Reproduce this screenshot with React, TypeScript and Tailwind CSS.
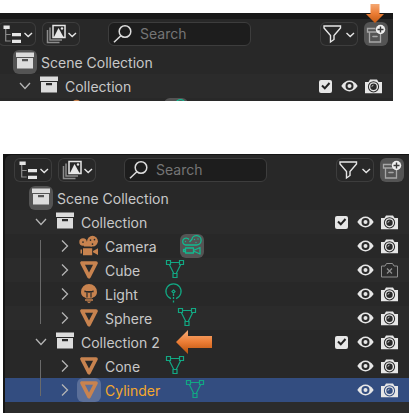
import type { ReactNode } from 'react';

type ObjectKind = 'camera' | 'mesh' | 'light';

interface SceneObject {
  name: string;
  kind: ObjectKind;
  renderable?: boolean;
  selected?: boolean;
}

interface SceneCollection {
  name: string;
  objects: SceneObject[];
  pointer?: boolean;
}

const fullScene: SceneCollection[] = [
  {
    name: 'Collection',
    objects: [
      { name: 'Camera', kind: 'camera' },
      { name: 'Cube', kind: 'mesh', renderable: false },
      { name: 'Light', kind: 'light' },
      { name: 'Sphere', kind: 'mesh' },
    ],
  },
  {
    name: 'Collection 2',
    pointer: true,
    objects: [
      { name: 'Cone', kind: 'mesh' },
      { name: 'Cylinder', kind: 'mesh', selected: true },
    ],
  },
];

function Icon({ children, className = '' }: { children: ReactNode; className?: string }) {
  return (
    <svg viewBox="0 0 24 24" fill="none" aria-hidden="true" className={`size-6 shrink-0 ${className}`}>
      {children}
    </svg>
  );
}

function CollectionIcon() {
  return (
    <Icon className="text-[#dcdcdc]">
      <path fill="currentColor" d="M3 2.500h18V7H3zM4 8h16v10.500H4zM9 9v2.200h6V9z" fillRule="evenodd" />
    </Icon>
  );
}

function ObjectIcon({ kind }: { kind: ObjectKind }) {
  if (kind === 'mesh') {
    return (
      <Icon className="text-[#c8834f]">
        <path d="M5 5h14L12 18.700z" stroke="currentColor" strokeWidth="3.700" strokeLinejoin="round" />
      </Icon>
    );
  }
  if (kind === 'light') {
    return (
      <Icon className="text-[#c8834f]">
        <path
          fill="currentColor"
          d="M12 2a8 8 0 0 0-8 8c0 2.800 1.500 5 4 5.500l1.200 1h5.600l1.200-1c2.500-.5 4-2.700 4-5.500a8 8 0 0 0-8-8zM8 17.300h8v1.500H8zM9.500 19.500h5L12 21.300z"
        />
        <path d="M8 8.500v1.200h8V8.500M10 9.700v5.800M14 9.700v5.800M12 9.700V11" stroke="#2a2a2a" strokeWidth="1.200" />
      </Icon>
    );
  }
  return (
    <Icon className="text-[#c8834f]">
      <circle cx="6" cy="8" r="3.700" fill="currentColor" />
      <circle cx="15.500" cy="7.200" r="5.400" fill="currentColor" />
      <path fill="currentColor" d="M6 7.500h9v5H7zM6 14.300h9.200v7H6zM3.500 15.500H5v4H3.500zM16 17l5-2.800v6.800l-5-2.700z" />
      <path d="M13.500 6v.1M17.500 5.500v.1M15.500 10v.1M6 8v.1" stroke="#2a2a2a" strokeWidth="1.700" strokeLinecap="round" />
    </Icon>
  );
}

function DataIcon({ kind }: { kind: ObjectKind }) {
  if (kind === 'mesh') {
    return (
      <Icon className="text-[#12a883]">
        <path
          d="M3.500 2.500h4v4h-4zM16.500 2.500h4v4h-4zM10 15.500h4v4h-4zM7.500 4.500h9M6.300 6.500l4.500 9M17.700 6.500l-4.500 9"
          stroke="currentColor"
          strokeWidth="1.200"
        />
      </Icon>
    );
  }
  if (kind === 'light') {
    return (
      <Icon className="text-[#12a883]">
        <path d="M10 16.600a7.600 7.600 0 1 1 5 0" stroke="currentColor" strokeWidth="1.200" />
        <path d="M12.500 8l1.600 1.600-1.600 1.600-1.600-1.600z" stroke="currentColor" strokeWidth="1.100" />
        <path d="M12.500 12v2M12.500 15v2M12.500 18.500v2" stroke="currentColor" strokeWidth="1.300" />
      </Icon>
    );
  }
  return (
    <Icon className="rounded-md bg-[#545454] text-[#12b98f]">
      <path
        d="M9 5.500A3.500 3.500 0 1 0 5.500 11h11a4.700 4.700 0 1 0-4.700-5.500L9.500 8M5.500 14h8v5h-8zM5.500 15.500h-2v2h2M13.500 16.500l6.500-3v6.500l-6.500-3"
        stroke="currentColor"
        strokeWidth="1.300"
        strokeLinejoin="round"
      />
      <path d="M14.500 5.500v.1M18 5v.1M16 8.500v.1M5.500 7.500v.1" stroke="currentColor" strokeWidth="1.400" strokeLinecap="round" />
    </Icon>
  );
}

function EyeIcon() {
  return (
    <Icon>
      <path
        fill="currentColor"
        fillRule="evenodd"
        d="M3.300 12C5.500 8.500 8.500 6.600 11.500 6.600s6 1.900 8.200 5.400c-2.200 3.500-5.200 5.400-8.200 5.400s-6-1.900-8.200-5.400zM11.500 8a4 4 0 1 0 0 8 4 4 0 0 0 0-8z"
      />
      <circle cx="11.500" cy="12" r="2" fill="currentColor" />
    </Icon>
  );
}

function RenderIcon({ enabled }: { enabled: boolean }) {
  if (!enabled) {
    return (
      <Icon className="text-[#8f8f8f]">
        <path d="M3.500 8H7l1.500-2.500h6L16 8h3.500v11h-16z" stroke="currentColor" strokeLinejoin="round" />
        <path d="M9 10.500l5 5M14 10.500l-5 5" stroke="currentColor" strokeWidth="1.200" />
      </Icon>
    );
  }
  return (
    <Icon>
      <path
        fill="currentColor"
        fillRule="evenodd"
        d="M3 8h3.500l1.500-2.500h7L16.500 8H20v11.300H3zM11.500 7.200a5.600 5.600 0 1 0 0 11.200 5.600 5.600 0 0 0 0-11.200z"
      />
      <circle cx="11.500" cy="12.800" r="3.900" stroke="currentColor" strokeWidth="1.400" />
      <path d="M9.900 12.800a1.600 1.600 0 0 1 1.600-1.600" stroke="currentColor" strokeWidth="0.700" />
    </Icon>
  );
}

function Disclosure({ open, name }: { open: boolean; name: string }) {
  return (
    <button type="button" aria-expanded={open} aria-label={`Toggle ${name}`} className="size-6 shrink-0 text-[#b5b5b5]">
      <Icon>
        <path d={open ? 'M7 9l5 5.500L17 9' : 'M9 6.500l5.500 5.500L9 17.500'} stroke="currentColor" strokeWidth="1.300" />
      </Icon>
    </button>
  );
}

function Label({ children, selected = false }: { children: ReactNode; selected?: boolean }) {
  return <span className={`ml-1 pt-0.5 whitespace-nowrap ${selected ? 'text-[#f5a82c]' : ''}`}>{children}</span>;
}

function Toggles({ name, renderable = true }: { name: string; renderable?: boolean }) {
  return (
    <>
      <button type="button" aria-label={`Hide ${name} in viewport`} className="size-6">
        <EyeIcon />
      </button>
      <button type="button" aria-label={`Disable ${name} in renders`} className="size-6">
        <RenderIcon enabled={renderable} />
      </button>
    </>
  );
}

function ObjectRow({ object }: { object: SceneObject }) {
  const { name, kind, selected } = object;
  return (
    <li className={`flex h-6 items-center pr-[7px] pl-12 ${selected ? 'bg-[#334d80]' : 'even:bg-[#2b2b2b]'}`}>
      <Disclosure open={false} name={name} />
      <span className={`size-6 shrink-0 rounded-md ${selected ? 'bg-[#5b6f99]' : ''}`}>
        <ObjectIcon kind={kind} />
      </span>
      <Label selected={selected}>{name}</Label>
      <span className="ml-[23px]">
        <DataIcon kind={kind} />
      </span>
      <div className="ml-auto flex text-[#e6e6e6]">
        <Toggles name={name} renderable={object.renderable} />
      </div>
    </li>
  );
}

function CollectionRow({ name, pointer = false, striped }: { name: string; pointer?: boolean; striped: boolean }) {
  return (
    <div className={`flex h-6 items-center pr-[7px] pl-6 ${striped ? 'bg-[#2b2b2b]' : ''}`}>
      <Disclosure open name={name} />
      <CollectionIcon />
      <Label>{name}</Label>
      {pointer && <LeftArrow />}
      <div className="ml-auto flex text-[#e6e6e6]">
        <label className="relative flex size-6 items-center pl-[5px]">
          <input
            type="checkbox"
            defaultChecked
            aria-label={`Include ${name}`}
            className="size-[13px] appearance-none rounded-xs bg-[#e6e6e6]"
          />
          <Icon className="pointer-events-none absolute inset-0 text-[#222222]">
            <path d="M8 11.500l2.800 2.800L15.500 9" stroke="currentColor" strokeWidth="2" />
          </Icon>
        </label>
        <Toggles name={name} />
      </div>
    </div>
  );
}

function CollectionGroup({ collection, striped }: { collection: SceneCollection; striped: boolean }) {
  const { name, objects, pointer } = collection;
  return (
    <section>
      <CollectionRow name={name} pointer={pointer} striped={striped} />
      <ul className="relative">
        {objects.map((object) => (
          <ObjectRow key={object.name} object={object} />
        ))}
        <li aria-hidden="true" className="absolute inset-y-1.5 left-[35px] w-px bg-[#6a6a6a]" />
      </ul>
    </section>
  );
}

/* Top sliver of the row that is scrolled out of view below a collection. */
function RowSliver() {
  return (
    <div aria-hidden="true" className="flex h-[3px] items-start overflow-hidden pl-[72px]">
      <ObjectIcon kind="camera" />
      <span className="ml-[79px]">
        <DataIcon kind="camera" />
      </span>
    </div>
  );
}

function LeftArrow() {
  return (
    <svg viewBox="0 0 36 24" aria-hidden="true" className="ml-4 h-6 w-9 shrink-0">
      <defs>
        <linearGradient id="pointer-left" x1="0" y1="0" x2="0" y2="1">
          <stop offset="0.100" stopColor="#f6a56d" />
          <stop offset="0.500" stopColor="#ec7d35" />
          <stop offset="0.900" stopColor="#c25a14" />
        </linearGradient>
      </defs>
      <path d="M0 12L12 0v6h24v12H12v6z" fill="url(#pointer-left)" />
    </svg>
  );
}

function DownArrow() {
  return (
    <svg viewBox="0 0 18 19" aria-hidden="true" className="pointer-events-none absolute right-[9px] -top-[9px] h-[19px] w-[18px]">
      <defs>
        <linearGradient id="pointer-down" x1="0" y1="0" x2="0" y2="1">
          <stop offset="0" stopColor="#f4a873" />
          <stop offset="0.500" stopColor="#ec7d35" />
          <stop offset="1" stopColor="#c25a14" />
        </linearGradient>
      </defs>
      <path d="M4.500 0h9v10H18l-9 9-9-9h4.500z" fill="url(#pointer-down)" />
    </svg>
  );
}

function MenuButton({ label, children }: { label: string; children: ReactNode }) {
  return (
    <button
      type="button"
      aria-label={label}
      aria-haspopup="menu"
      className="h-6 w-[38px] shrink-0 rounded-md text-[#e6e6e6] ring-1 ring-[#3d3d3d] ring-inset"
    >
      <svg viewBox="0 0 38 24" fill="none" aria-hidden="true" className="h-6 w-[38px]">
        {children}
        <path d="M26.500 11l3.700 3.500L34 11" stroke="currentColor" strokeWidth="1.400" />
      </svg>
    </button>
  );
}

function Header() {
  return (
    <header className="flex items-center pt-[3px] pr-[5px] pb-1 pl-[9px]">
      <div className="flex gap-1.5">
        <MenuButton label="Editor type">
          <path fill="currentColor" d="M5.500 3.500h6.200V7H5.500zM14 11h9v3.200h-9zM14 17.700h9V21h-9z" />
          <path d="M7.700 7v12h5M7.700 12.500h5" stroke="#8c8c8c" strokeWidth="1.200" />
        </MenuButton>
        <MenuButton label="Display mode">
          <path d="M5.500 8v12.500h12M8 5.500V18h12" stroke="#8c8c8c" strokeWidth="1.500" />
          <path d="M11 3.500h12v12H11z" stroke="currentColor" strokeWidth="1.500" />
          <path d="M12 15l4.500-9 5 9z" fill="currentColor" />
          <circle cx="20" cy="6.500" r="1.200" fill="currentColor" />
        </MenuButton>
      </div>
      <label className="relative ml-7 w-[143px]">
        <Icon className="absolute top-0 left-0 text-[#dcdcdc]">
          <circle cx="17" cy="9.500" r="5.800" stroke="currentColor" strokeWidth="1.500" />
          <path d="M12.800 13.700L6 20.300" stroke="currentColor" strokeWidth="1.500" />
        </Icon>
        <input
          type="search"
          aria-label="Search"
          placeholder="Search"
          className="block h-6 w-full rounded-md border border-[#3d3d3d] bg-[#1d1d1d] pl-[31px] placeholder:text-[#757575] placeholder:opacity-100"
        />
      </label>
      <div className="ml-auto flex gap-1.5">
        <MenuButton label="Filter">
          <path d="M4 4h16.500v2L14 13.500v4L10.500 20v-6.500L4 6z" stroke="currentColor" strokeWidth="1.400" />
        </MenuButton>
        <button type="button" aria-label="New collection" className="size-6 rounded-md bg-[#545454] text-[#a6a6a6]">
          <Icon>
            <path d="M11.500 6.500h-8V10h14M5.500 10v10h11V10" stroke="currentColor" strokeWidth="1.300" />
            <path d="M9 14.500h4" stroke="currentColor" strokeWidth="1.600" strokeLinecap="round" />
            <circle cx="16.500" cy="7.500" r="4.700" fill="#f0f0f0" />
            <path d="M16.500 4.500v6M13.500 7.500h6" stroke="#3a3a3a" strokeWidth="1.400" />
          </Icon>
        </button>
      </div>
    </header>
  );
}

function SceneRow() {
  return (
    <div className="flex h-6 items-center pl-6">
      <span className="size-6 rounded-md bg-[#545454]">
        <CollectionIcon />
      </span>
      <Label>Scene Collection</Label>
    </div>
  );
}

export default function App() {
  return (
    <main className="bg-white pt-[13px] font-[Inter,sans-serif] text-sm leading-6 text-[#c8c8c8]">
      <div className="relative mr-4 bg-[#181818] pt-1.5">
        <div className="overflow-hidden bg-[#282828]">
          <div className="-ml-[11px]">
            <Header />
            <SceneRow />
            <CollectionRow name="Collection" striped />
            <RowSliver />
          </div>
        </div>
        <DownArrow />
      </div>
      <div className="mt-[53px] ml-[3px] bg-[#141414] pt-px pl-0.5">
        <div className="rounded-tl-md bg-[#282828]">
          <Header />
          <SceneRow />
          {fullScene.map((collection, index) => (
            <CollectionGroup key={collection.name} collection={collection} striped={index === 0} />
          ))}
          <div className="h-[11px] bg-[#2b2b2b]" />
        </div>
      </div>
    </main>
  );
}
